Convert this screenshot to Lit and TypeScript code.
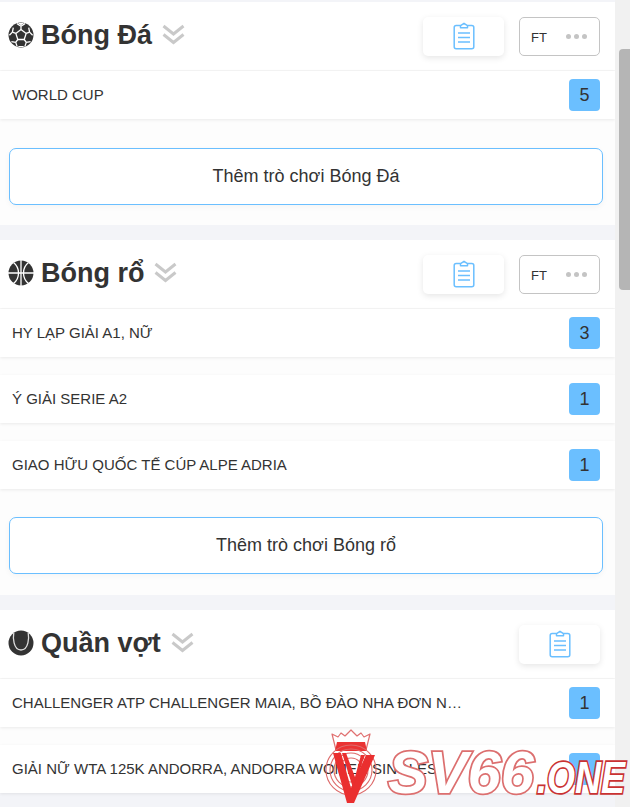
import { LitElement, html, css, svg } from "lit";
import { customElement } from "lit/decorators.js";

const ball = html`<svg class="sport" viewBox="0 0 26 26"><circle cx="13" cy="13" r="12.5" fill="#333"/><g fill="none" stroke="#fff" stroke-width="1.300" stroke-linejoin="round"><path d="M13 7.600l5.200 3.800-2 6.100H9.800l-2-6.100z"/><path d="M13 7.600V4.200M18.200 11.400l3.400-1.300M16.200 17.500l2.100 2.900M9.800 17.500l-2.100 2.900M7.800 11.400 4.400 10.100"/><path d="M13 4.200 9 1.600M13 4.200l4-2.600M21.600 10.100l-.9-4.500M21.600 10.100l3 3.200M18.300 20.400l4.300-.8M18.300 20.400l-1.500 4.200M7.700 20.400l-4.300-.8M7.700 20.400l1.500 4.200M4.400 10.100l.9-4.500M4.400 10.100l-3 3.200"/></g><g fill="#fff"><path d="M9.800 1 13 3.200 16.200 1z"/><path d="M9.800 25l1-1.100h4.400l1 1.100z"/></g></svg>`;
const basket = html`<svg class="sport" viewBox="0 0 26 26"><circle cx="13" cy="13" r="12.500" fill="#333"/><g fill="none" stroke="#fff" stroke-width="1.300"><path d="M13 0v26M0 13h26"/><path d="M5.500 2.500c3.500 2.800 5 6.500 5 10.500s-1.500 7.700-5 10.500M20.500 2.500c-3.500 2.800-5 6.500-5 10.500s1.500 7.700 5 10.500"/></g></svg>`;
const tennis = html`<svg class="sport" viewBox="0 0 26 26"><circle cx="13" cy="13" r="12.500" fill="#333"/><path d="M5.800 2.600C5 7 5 20 13 20s8-13 7.200-17.400" fill="none" stroke="#ddd" stroke-width="1.300"/></svg>`;

const chevrons = html`<svg class="chev" viewBox="0 0 23 21"><path d="M1.500 2l10 8 10-8M1.500 10.500l10 8 10-8" fill="none" stroke="#c9c9c9" stroke-width="3"/></svg>`;
const clip = html`<svg class="clip" viewBox="0 0 22 28"><path d="M7.500 3.600H3.200C2 3.600 1.200 4.400 1.200 5.600v19.200c0 1.200.8 2 2 2h15.600c1.200 0 2-.8 2-2V5.600c0-1.200-.8-2-2-2h-4.300M7.500 5.800V3.600L11 1.300l3.500 2.300v2.200z" fill="none" stroke="#6bbfff" stroke-width="1.500" stroke-linejoin="round"/><path d="M5 11h12M5 15.500h12M5 20h12" stroke="#6bbfff" stroke-width="1.500"/></svg>`;

type Row = { name: string; count: number };
type Sec = { icon: unknown; title: string; ft: boolean; rows: Row[]; more?: string };

const sections: Sec[] = [
  { icon: ball, title: "Bóng Đá", ft: true, rows: [{ name: "WORLD CUP", count: 5 }], more: "Thêm trò chơi Bóng Đá" },
  { icon: basket, title: "Bóng rổ", ft: true, rows: [
    { name: "HY LẠP GIẢI A1, NỮ", count: 3 },
    { name: "Ý GIẢI SERIE A2", count: 1 },
    { name: "GIAO HỮU QUỐC TẾ CÚP ALPE ADRIA", count: 1 },
  ], more: "Thêm trò chơi Bóng rổ" },
  { icon: tennis, title: "Quần vợt", ft: false, rows: [
    { name: "CHALLENGER ATP CHALLENGER MAIA, BỒ ĐÀO NHA ĐƠN NAM", count: 1 },
    { name: "GIẢI NỮ WTA 125K ANDORRA, ANDORRA WOMEN SINGLES", count: 3 },
  ] },
];

@customElement("app-root")
export class AppRoot extends LitElement {
  static styles = css`
    :host { display: flex; height: 807px; overflow: hidden; position: relative; font-family: "Liberation Sans", Arial, sans-serif; color: #333; background: #f1f1f1; }
    .main { width: 615px; flex: none; background: #f3f4f8; padding-top: 2px; box-sizing: border-box; }
    .track { width: 15px; flex: none; background: #f1f1f1; display: flex; justify-content: flex-end; align-items: flex-start; }
    .thumb { width: 11px; height: 241px; margin-top: 49px; background: #b5b5b5; border-radius: 4px 0 0 4px; }
    .section { background: #fdfdfd; margin-bottom: 15px; }
    .head { height: 68px; background: #fff; display: flex; align-items: center; padding: 0 15px 0 8px; box-sizing: border-box; box-shadow: 0 1px 2px rgba(0,0,0,.05); margin-bottom: 1px; }
    .sport { width: 26px; height: 26px; flex: none; margin-top: -3px; }
    h2 { margin: -3px 0 0 7px; font-size: 27px; line-height: 30px; font-weight: 700; color: #333; }
    .chev { width: 23px; height: 21px; margin: -3px 0 0 10px; flex: none; }
    .tools { margin-left: auto; display: flex; gap: 15px; }
    .clipbtn { width: 81px; height: 39px; border-radius: 5px; background: #fff; box-shadow: 0 2px 6px rgba(0,0,0,.1); display: flex; align-items: center; justify-content: center; }
    .clip { width: 22px; height: 28px; }
    .ft { width: 81px; height: 39px; box-sizing: border-box; border: 1px solid #c4c4c4; border-radius: 5px; display: flex; align-items: center; justify-content: space-between; padding: 0 12px 0 11px; font-size: 13px; }
    .ft span:first-child { margin-top: 2px; }
    .dots { display: flex; gap: 3px; }
    .dots i { width: 5px; height: 5px; border-radius: 50%; background: #c4c4c4; }
    .row { height: 48px; background: #fff; display: flex; align-items: center; justify-content: space-between; padding: 0 15px 0 12px; box-sizing: border-box; box-shadow: 0 1px 3px rgba(0,0,0,.08); margin-bottom: 18px; }
    .name { font-size: 15px; width: 450px; white-space: nowrap; overflow: hidden; text-overflow: ellipsis; color: #333; margin-top: -2px; }
    .count { width: 31px; height: 32px; border-radius: 4px; background: #6bbfff; display: flex; align-items: center; justify-content: center; font-size: 18px; color: #333; }
    .more { margin: 29px 12px 0 9px; padding-bottom: 20px; }
    .section:nth-child(2) .more { margin-top: 28px; padding-bottom: 21px; }
    .more button { display: block; width: 100%; height: 57px; background: #fff; border: 1px solid #6bbfff; border-radius: 7px; font: 18px "Liberation Sans", Arial, sans-serif; color: #333; box-shadow: 0 2px 6px rgba(0,0,0,.04); }
    .logo { position: absolute; left: 331px; top: 730px; width: 299px; height: 77px; pointer-events: none; }
    .logo svg { display: block; overflow: visible; }
    .wm { font-family: "Liberation Sans", Arial, sans-serif; font-style: italic; font-weight: 700; paint-order: stroke; }
    .sv { font-size: 60px; fill: #fff; stroke: #dc6f6f; stroke-width: 3.500; }
    .one { font-size: 44px; fill: #fff; stroke: #c93232; stroke-width: 3.500; }
  `;

  private logo() {
    return svg`<svg width="299" height="77" viewBox="0 0 299 77">
      <path d="M1 4L7 7L10 3L14 6L20 0L26 6L30 3L33 7L39 4L35 20H5Z" fill="#fff" fill-opacity=".8" stroke="#e07070" stroke-width="1.200" stroke-linejoin="round"/>
      <path d="M6 12H34L36 21H4Z" fill="#ea3333"/>
      <g fill="none" stroke="#dd6a6a" stroke-width="1.100">
        <circle cx="20" cy="40" r="25"/><circle cx="20" cy="40" r="21"/><circle cx="20" cy="40" r="17"/><circle cx="20" cy="40" r="12"/>
      </g>
      <path d="M2 23H10L20 58L35 25H44L23 73H16Z" fill="#ea2f2f"/>
      <path d="M11 23H15L24 47L30 25H34L22 58Z" fill="#ea2f2f"/>
      <text class="wm sv" x="57" y="63" textLength="146" lengthAdjust="spacingAndGlyphs">SV66</text>
      <text class="wm one" x="206" y="63" textLength="88" lengthAdjust="spacingAndGlyphs">.ONE</text>
    </svg>`;
  }

  render() {
    return html`
      <div class="main">
        ${sections.map((s) => html`
          <section class="section">
            <div class="head">
              ${s.icon}
              <h2>${s.title}</h2>
              ${chevrons}
              <div class="tools">
                <div class="clipbtn">${clip}</div>
                ${s.ft ? html`<div class="ft"><span>FT</span><span class="dots"><i></i><i></i><i></i></span></div>` : ""}
              </div>
            </div>
            ${s.rows.map((r) => html`<div class="row"><span class="name">${r.name}</span><span class="count">${r.count}</span></div>`)}
            ${s.more ? html`<div class="more"><button>${s.more}</button></div>` : ""}
          </section>`)}
      </div>
      <div class="track"><div class="thumb"></div></div>
      <div class="logo">${this.logo()}</div>
    `;
  }
}
